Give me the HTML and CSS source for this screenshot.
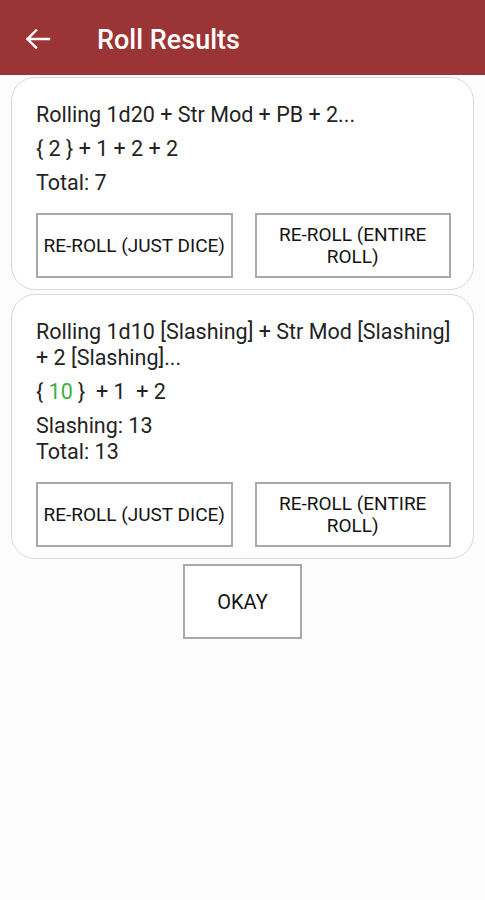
FILE: index.html
```html
<!DOCTYPE html>
<html>
<head>
<meta charset="utf-8">
<link rel="stylesheet" href="styles.css">
</head>
<body>
<header class="appbar">
  <svg class="back" width="26" height="24" viewBox="0 0 26 24">
    <path d="M2.5 12H24M2.5 12L11 3.5M2.5 12L11 20.5" fill="none" stroke="#fff" stroke-width="2.4" stroke-linecap="square"/>
  </svg>
  <h1 class="title">Roll Results</h1>
</header>
<main class="content">
  <section class="card">
    <p class="line">Rolling 1d20 + Str Mod + PB + 2...</p>
    <p class="line">{ 2 } + 1 + 2 + 2</p>
    <p class="line">Total: 7</p>
    <div class="actions">
      <button class="btn">RE-ROLL (JUST DICE)</button>
      <button class="btn">RE-ROLL (ENTIRE ROLL)</button>
    </div>
  </section>
  <section class="card card2">
    <p class="line">Rolling 1d10 [Slashing] + Str Mod [Slashing] + 2 [Slashing]...</p>
    <p class="line">{ <span class="crit">10</span> } &nbsp;+ 1 &nbsp;+ 2</p>
    <p class="line">Slashing: 13<br>Total: 13</p>
    <div class="actions">
      <button class="btn">RE-ROLL (JUST DICE)</button>
      <button class="btn">RE-ROLL (ENTIRE ROLL)</button>
    </div>
  </section>
  <div class="footer">
    <button class="btn okay">OKAY</button>
  </div>
</main>
</body>
</html>
```
FILE: styles.css
```css
html, body {
  margin: 0;
  padding: 0;
  background: #fcfcfc;
}
body {
  width: 485px;
  height: 900px;
  font-family: Roboto, "Liberation Sans", sans-serif;
  color: #222;
}
.appbar {
  height: 75px;
  background: #9b3435;
  display: flex;
  align-items: center;
  padding-left: 25px;
  box-sizing: border-box;
}
.back {
  display: block;
  margin-top: 2px;
}
.title {
  margin: 0 0 0 46px;
  color: #fff;
  font-size: 27px;
  font-weight: 500;
  line-height: 32px;
  margin-top: 4px;
}
.content {
  display: flex;
  flex-direction: column;
  padding-top: 2px;
}
.card {
  margin: 0 11px;
  border: 1px solid #d9d9d9;
  border-radius: 24px;
  background: #fff;
  padding: 24px 12px 11px 24px;
  display: flex;
  flex-direction: column;
  gap: 8px;
}
.card2 {
  margin-top: 4px;
}
.line {
  margin: 0;
  font-size: 21.5px;
  line-height: 26px;
  color: #232323;
}
.crit {
  color: #3bb042;
}
.actions {
  margin-top: 9px;
  padding-right: 10px;
  display: grid;
  grid-template-columns: 1fr 1fr;
  gap: 22px;
}
.btn {
  font-family: Roboto, "Liberation Sans", sans-serif;
  font-size: 19px;
  font-weight: 400;
  color: #141414;
  background: #fff;
  border: 2px solid #a9a9a9;
  height: 65px;
  padding: 0 5px;
  line-height: 22px;
  text-align: center;
}
.footer {
  display: flex;
  justify-content: center;
  margin-top: 5px;
}
.okay {
  width: 119px;
  height: 75px;
  font-size: 20px;
}
```
